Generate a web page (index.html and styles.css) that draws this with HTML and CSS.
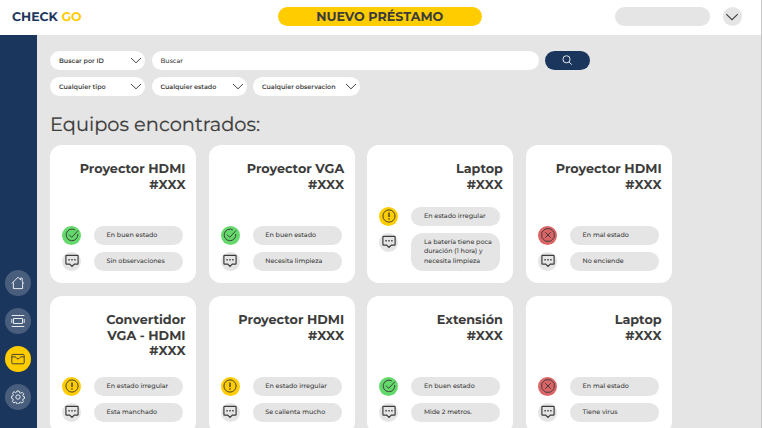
FILE: index.html
```html
<!DOCTYPE html>
<html lang="es">
<head>
<meta charset="utf-8">
<title>Check Go</title>
<link rel="stylesheet" href="styles.css">
</head>
<body>
<svg class="defs" aria-hidden="true">
  <symbol id="chevron" viewBox="0 0 12 7"><path d="M1 1 6 5.8 11 1"/></symbol>
  <symbol id="search" viewBox="0 0 12 12"><circle cx="4.9" cy="4.7" r="3.9"/><path d="m7.700 7.600 3 3"/></symbol>
  <symbol id="home" viewBox="0 0 14 14"><path d="M.9 7.400 7 1.200l2.600 2.700V2.200h1.600v3.300l1.900 1.900M2.400 6.400v6.200h9.200V6.400"/></symbol>
  <symbol id="list" viewBox="0 0 14 14"><path d="M.7 1.500h12.600M.7 12.500h12.600M2.500 4.500h9v5h-9zM.8 5v4M13.200 5v4"/></symbol>
  <symbol id="inbox" viewBox="0 0 14 14"><path d="M1.800 2.400h10.400q1 0 1 1v7.400q0 1-1 1H1.800q-1 0-1-1V3.400q0-1 1-1zM.8 4.900h3.700c.6 0 .8 2 2.500 2s1.900-2 2.500-2h3.700"/></symbol>
  <symbol id="gear" viewBox="0 0 14 14"><circle cx="7" cy="7" r="2.200"/><path d="m5.900 1h2.200l.4 1.700 1.200.5 1.500-.9 1.500 1.500-.9 1.500.5 1.200 1.200.2v1.800l-1.400.4-.5 1.200.9 1.500-1.500 1.500-1.500-.9-1.200.5-.4 1.300H6l-.4-1.400-1.200-.5-1.500.9-1.500-1.500.9-1.500-.5-1.200L.6 8.300V6.200l1.300-.4.5-1.200-.9-1.500L3 1.700l1.500.9 1.100-.5z"/></symbol>
  <symbol id="check" viewBox="0 0 14 14"><path d="M9.900 1.900A5.800 5.800 0 1 0 12.700 6M4 6.600l2.700 2.700 6.400-6.800"/></symbol>
  <symbol id="warn" viewBox="0 0 14 14"><circle cx="7" cy="7" r="6.100"/><path class="bold" d="M7 3.600v4.300M7 9.200v1.300"/></symbol>
  <symbol id="bad" viewBox="0 0 14 14"><path d="M4.400.8h5.200l3.600 3.600v5.200l-3.600 3.600H4.400L.8 9.600V4.400zM4.200 4.200l5.600 5.600M9.800 4.200 4.200 9.800"/></symbol>
  <symbol id="note" viewBox="0 0 14 14"><path class="mid" d="M1.500 1.400h11q.6 0 .6.600v7.500q0 .6-.6.600H9.300L7 12.500 4.700 10.100H1.500q-.6 0-.6-.6V2q0-.6.6-.6z"/><path class="bold" d="M3.400 5.700h1.400M6.300 5.700h1.400M9.200 5.700h1.400"/></symbol>
</svg>
<div class="app">
  <header class="topbar">
    <div class="logo">CHECK <span>GO</span></div>
    <button class="new-loan">NUEVO PRÉSTAMO</button>
    <div class="user"><span class="user-name"></span><button class="user-menu"><svg><use href="#chevron"/></svg></button></div>
  </header>
  <div class="body">
    <nav class="sidebar">
      <a class="nav"><svg><use href="#home"/></svg></a>
      <a class="nav"><svg><use href="#list"/></svg></a>
      <a class="nav active"><svg><use href="#inbox"/></svg></a>
      <a class="nav"><svg><use href="#gear"/></svg></a>
    </nav>
    <main class="content">
      <div class="filters">
        <div class="select"><span>Buscar por ID</span><svg><use href="#chevron"/></svg></div>
        <div class="field"><span>Buscar</span></div>
        <button class="go"><svg><use href="#search"/></svg></button>
      </div>
      <div class="filters">
        <div class="select"><span>Cualquier tipo</span><svg><use href="#chevron"/></svg></div>
        <div class="select"><span>Cualquier estado</span><svg><use href="#chevron"/></svg></div>
        <div class="select wide"><span>Cualquier observacion</span><svg><use href="#chevron"/></svg></div>
      </div>
      <h1>Equipos encontrados:</h1>
      <section class="grid">
        <article class="card"><h2>Proyector HDMI<br>#XXX</h2>
          <div class="row"><i class="dot good"><svg><use href="#check"/></svg></i><p>En buen estado</p></div>
          <div class="row"><i class="dot"><svg><use href="#note"/></svg></i><p>Sin observaciones</p></div></article>
        <article class="card"><h2>Proyector VGA<br>#XXX</h2>
          <div class="row"><i class="dot good"><svg><use href="#check"/></svg></i><p>En buen estado</p></div>
          <div class="row"><i class="dot"><svg><use href="#note"/></svg></i><p>Necesita limpieza</p></div></article>
        <article class="card"><h2>Laptop<br>#XXX</h2>
          <div class="row"><i class="dot fair"><svg><use href="#warn"/></svg></i><p>En estado irregular</p></div>
          <div class="row"><i class="dot"><svg><use href="#note"/></svg></i><p class="long">La batería tiene poca<br>duración (1 hora) y<br>necesita limpieza</p></div></article>
        <article class="card"><h2>Proyector HDMI<br>#XXX</h2>
          <div class="row"><i class="dot poor"><svg><use href="#bad"/></svg></i><p>En mal estado</p></div>
          <div class="row"><i class="dot"><svg><use href="#note"/></svg></i><p>No enciende</p></div></article>
        <article class="card"><h2>Convertidor<br>VGA - HDMI<br>#XXX</h2>
          <div class="row"><i class="dot fair"><svg><use href="#warn"/></svg></i><p>En estado irregular</p></div>
          <div class="row"><i class="dot"><svg><use href="#note"/></svg></i><p>Esta manchado</p></div></article>
        <article class="card"><h2>Proyector HDMI<br>#XXX</h2>
          <div class="row"><i class="dot fair"><svg><use href="#warn"/></svg></i><p>En estado irregular</p></div>
          <div class="row"><i class="dot"><svg><use href="#note"/></svg></i><p>Se calienta mucho</p></div></article>
        <article class="card"><h2>Extensión<br>#XXX</h2>
          <div class="row"><i class="dot good"><svg><use href="#check"/></svg></i><p>En buen estado</p></div>
          <div class="row"><i class="dot"><svg><use href="#note"/></svg></i><p>Mide 2 metros.</p></div></article>
        <article class="card"><h2>Laptop<br>#XXX</h2>
          <div class="row"><i class="dot poor"><svg><use href="#bad"/></svg></i><p>En mal estado</p></div>
          <div class="row"><i class="dot"><svg><use href="#note"/></svg></i><p>Tiene virus</p></div></article>
      </section>
    </main>
  </div>
</div>
</body>
</html>
```
FILE: styles.css
```css
* { box-sizing: border-box; margin: 0; padding: 0; }
body { font-family: Montserrat, Inter, "Open Sans", sans-serif; color: #3c3c3b; background: #e5e5e5; overflow: hidden; text-rendering: geometricPrecision; }
button { border: 0; font: inherit; color: inherit; }
svg { fill: none; stroke: currentColor; stroke-width: .95; display: block; overflow: visible; }
.defs { display: none; }
.mid { stroke-width: 1.2; }
.bold { stroke-width: 1.4; }
.app { height: 428px; display: flex; flex-direction: column; border-right: 1px solid #c6c6c6; overflow: hidden; }
.topbar { height: 35px; flex: none; background: #fff; display: grid; grid-template-columns: 266px 203.500px 1fr; padding: 7px 19px 9px 12px; align-items: center; }
.logo { font-size: 12.500px; font-weight: 700; color: #1b365d; white-space: nowrap; padding-top: 2px; }
.logo span { color: #ffcc00; }
.new-loan { height: 19px; border-radius: 10px; background: #ffcc00; font-size: 12.700px; font-weight: 700; line-height: 19px; white-space: nowrap; }
.user { display: flex; justify-content: flex-end; gap: 12.500px; }
.user-name { width: 95px; height: 19px; border-radius: 10px; background: #e5e5e5; }
.user-menu { width: 19.500px; height: 19px; border-radius: 50%; background: #e5e5e5; display: grid; place-items: center; }
.user-menu svg { width: 14px; height: 8px; }
.body { flex: 1; min-height: 0; display: flex; }
.sidebar { width: 37px; flex: none; background: #1b365d; display: flex; flex-direction: column; justify-content: flex-end; align-items: center; gap: 12px; padding: 0 2px 18px 0; }
.nav { width: 26px; height: 26px; border-radius: 50%; background: #495e7d; color: #eef1f5; display: grid; place-items: center; }
.nav svg { width: 14px; height: 14px; }
.nav.active { background: #ffcc00; color: #3c3c3b; }
.content { flex: 1; padding: 16px 0 0 13px; }
.filters { display: flex; gap: 6.500px; margin-bottom: 7px; font-size: 6.400px; font-weight: 600; }
.select, .field { height: 19px; border-radius: 10px; background: #fff; display: flex; align-items: center; justify-content: space-between; padding: 0 3px 0 9px; white-space: nowrap; }
.select { width: 95px; }
.select.wide { width: 107px; }
.select svg { width: 12px; height: 7px; }
.field { width: 387px; font-weight: 500; }
.go { width: 44.500px; height: 19px; border-radius: 10px; background: #1b365d; color: #fff; display: grid; place-items: center; }
.go svg { width: 11px; height: 11px; }
h1 { font-size: 19.400px; font-weight: 400; line-height: 24px; margin: 16px 0 8.500px; white-space: nowrap; -webkit-text-stroke: .2px currentColor; }
.grid { display: grid; grid-template-columns: repeat(4, 146px); grid-auto-rows: 138px; gap: 13px 12.700px; }
.card { background: #fff; border-radius: 12px; padding: 17.500px 10.500px 12px 12px; display: flex; flex-direction: column; gap: 7px; }
h2 { flex: 1; min-height: 0; font-size: 12.750px; font-weight: 700; line-height: 15.500px; text-align: right; white-space: nowrap; }
.row { display: flex; gap: 13px; flex: none; }
.dot { width: 19px; height: 19px; flex: none; border-radius: 50%; background: #e5e5e5; display: grid; place-items: center; }
.dot svg { width: 14px; height: 14px; }
.good { background: #64d96b; }
.fair { background: #ffcc00; }
.poor { background: #da6466; }
.row p { width: 89px; height: 19px; border-radius: 10px; background: #e5e5e5; padding-left: 12.500px; font-size: 6.400px; font-weight: 500; line-height: 19px; white-space: nowrap; }
.row p.long { height: 38px; border-radius: 12px; padding-top: 5px; line-height: 9.500px; }
```
